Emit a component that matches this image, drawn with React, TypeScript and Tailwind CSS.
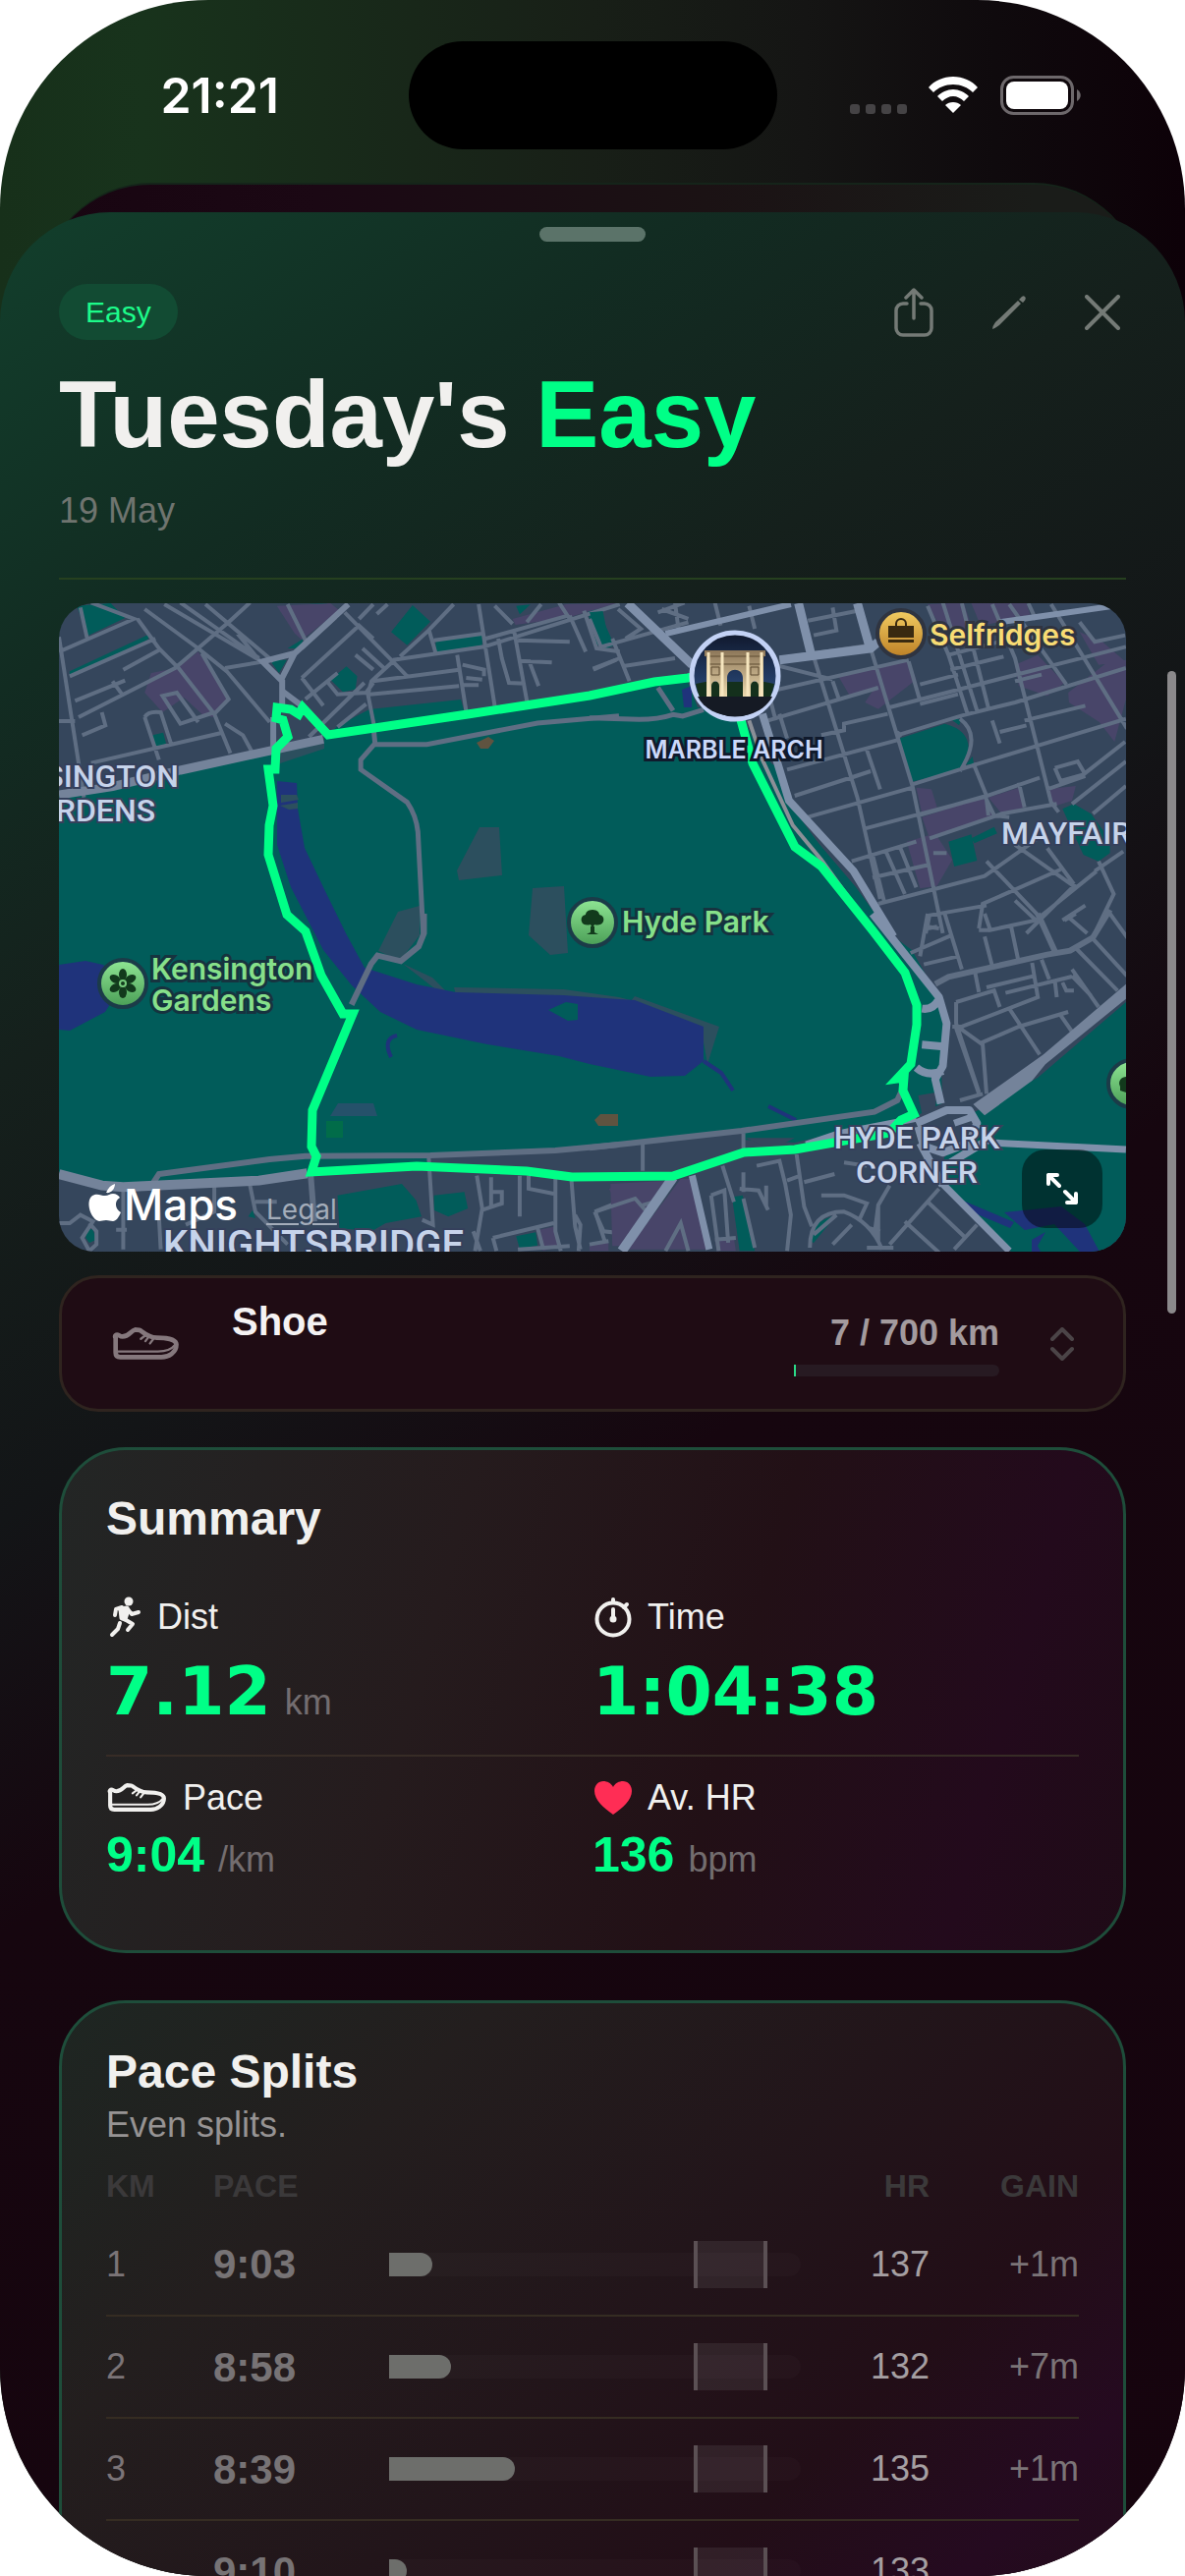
import type { ReactNode } from 'react';

const summary = [
  { icon: <RunnerIcon />, label: 'Dist', value: '7.12', unit: 'km', large: true },
  { icon: <StopwatchIcon />, label: 'Time', value: '1:04:38', unit: '', large: true },
  { icon: <ShoeIcon className="w-[62px] h-[30px]" />, label: 'Pace', value: '9:04', unit: '/km', large: false },
  { icon: <HeartIcon />, label: 'Av. HR', value: '136', unit: 'bpm', large: false },
];

const splits = [
  { km: 1, pace: '9:03', fill: 10.5, hr: 137, gain: '+1m' },
  { km: 2, pace: '8:58', fill: 15, hr: 132, gain: '+7m' },
  { km: 3, pace: '8:39', fill: 30.6, hr: 135, gain: '+1m' },
  { km: 4, pace: '9:10', fill: 4.3, hr: 133, gain: '' },
];

export default function App() {
  return (
    <div className="relative flex h-screen flex-col overflow-hidden rounded-[212px] bg-[linear-gradient(90deg,#17301a_0%,#18331c_12%,#181f17_50%,#151514_68%,#0f0a0d_84%,#0d0108_100%)] font-['Liberation_Sans',Arial,sans-serif] text-[#f1f0ee]">
      <StatusBar />

      {/* Card stacked behind the open sheet */}
      <div className="mx-[42px] mt-[34px] -mb-28 h-[142px] shrink-0 rounded-t-[112px] border-t-2 border-[#15241a] bg-[linear-gradient(90deg,#180511_0%,#1b0814_25%,#1b1214_60%,#1a1c19_90%)]" />

      <main className="relative min-h-0 flex-1 overflow-hidden rounded-t-[112px] bg-[linear-gradient(145deg,#123f2c_0%,#122c22_15%,#15201c_27%,#131517_41%,#16060f_54%,#16040e_100%)] px-[60px]">
        <div className="mx-auto mt-[15px] h-[15px] w-[108px] rounded-full bg-[#5b7369]" />

        <header className="border-b-2 border-[#26401f] pb-12">
          <div className="mt-[43px] flex items-center justify-between">
            <span className="rounded-full bg-[#124b33] px-[27px] py-[10px] text-[30px] leading-[37px] text-[#1dfb8a]">Easy</span>
            <div className="flex items-center gap-[59px] text-[#747a76]">
              <button type="button" aria-label="Share"><ShareIcon /></button>
              <button type="button" aria-label="Edit"><PencilIcon /></button>
              <button type="button" aria-label="Close" className="mr-[6px]"><CloseIcon /></button>
            </div>
          </div>
          <h1 className="mt-7 text-[96px] font-bold leading-[96px]">
            Tuesday&apos;s <span className="text-[#00ff87]">Easy</span>
          </h1>
          <p className="mt-[30px] text-[36px] leading-10 text-[#6f746f]">19 May</p>
        </header>

        <section className="relative mt-6 overflow-hidden rounded-[36px]">
          <RouteMap />
          <a href="#legal" className="absolute bottom-[27px] left-[211px] font-['Inter',sans-serif] text-[28px] leading-8 text-[#a4adba] underline decoration-2 underline-offset-4">
            Legal
          </a>
          <button type="button" aria-label="Expand map" className="absolute right-6 bottom-6 flex h-20 w-[82px] items-center justify-center rounded-3xl bg-black/45">
            <ExpandIcon />
          </button>
        </section>

        <button type="button" className="mt-6 flex h-[139px] w-full items-center rounded-[40px] border-3 border-[#2f241f] bg-[#1f0c14] px-[50px] text-left">
          <ShoeIcon className="h-[34px] w-[70px] text-[#85787d]" />
          <span className="ml-[53px] self-start pt-5 text-[40px] font-bold leading-12 text-[#f5f2f3]">Shoe</span>
          <span className="ml-auto flex w-[209px] flex-col items-end gap-[10px]">
            <span className="text-[36px] font-bold leading-11 whitespace-nowrap text-[#a39b9e]">7 / 700 km</span>
            <span className="h-3 w-full overflow-hidden rounded-r-md bg-[#271a22]">
              <span className="block h-full w-[1%] bg-[#2bd987]" />
            </span>
          </span>
          <ChevronsIcon />
        </button>

        <section className="mt-9 rounded-[68px] border-3 border-[#1e4d3a] bg-[linear-gradient(105deg,#232625_0%,#251b1d_35%,#221016_62%,#230a1c_85%,#1f0b17_100%)] px-[45px] pt-[42px] pb-[69px]">
          <h2 className="text-[48px] font-bold leading-14">Summary</h2>
          <div className="mt-[50px] grid grid-cols-2 border-b-2 border-[#372c26] pb-7">
            {summary.slice(0, 2).map((item) => <Stat key={item.label} {...item} />)}
          </div>
          <div className="mt-5 grid grid-cols-2">
            {summary.slice(2).map((item) => <Stat key={item.label} {...item} />)}
          </div>
        </section>

        <section className="mt-12 rounded-[68px] border-3 border-[#1e4d3a] bg-[linear-gradient(135deg,#1e2622_0%,#231e1e_25%,#22151a_50%,#220e17_70%,#250a20_85%,#220c18_100%)] px-[45px] pt-[42px] pb-12">
          <h2 className="text-[48px] font-bold leading-14">Pace Splits</h2>
          <p className="mt-1 text-[36px] leading-11 text-[#969393]">Even splits.</p>
          <table className="mt-3 w-full table-fixed text-[36px] text-[#7b7477]">
            <thead className="text-[32px] text-[#3b393a]">
              <tr className="h-14">
                <th className="w-[109px] p-0 text-left">KM</th>
                <th className="w-[179px] p-0 text-left">PACE</th>
                <th className="p-0"><span className="sr-only">Effort</span></th>
                <th className="w-[131px] p-0 text-right">HR</th>
                <th className="w-[152px] p-0 text-right">GAIN</th>
              </tr>
            </thead>
            <tbody>
              {splits.map((split) => (
                <tr key={split.km} className="h-[104px] border-b-2 border-[#352c22]">
                  <td className="p-0">{split.km}</td>
                  <td className="p-0 text-[42px] font-bold text-[#777375]">{split.pace}</td>
                  <td className="p-0"><PaceBar fill={split.fill} /></td>
                  <td className="p-0 text-right text-[#a59fa2]">{split.hr}</td>
                  <td className="p-0 text-right">{split.gain}</td>
                </tr>
              ))}
            </tbody>
          </table>
        </section>
      </main>

      {/* Scroll indicator */}
      <div className="absolute top-[683px] right-[9px] h-[654px] w-[9px] rounded-full bg-[#8b898b]" />
    </div>
  );
}

function StatusBar() {
  return (
    <div className="mt-[42px] grid h-[110px] shrink-0 grid-cols-[1fr_375px_1fr] items-center">
      <span className="pl-8 text-center font-['Inter',sans-serif] text-[50px] font-semibold leading-none text-white">21:21</span>
      <span className="h-full rounded-full bg-black" />
      <div className="flex items-center justify-center pr-8">
        <svg viewBox="0 0 58 38" className="h-[38px] w-[58px]" fill="#454345">
          <rect x="0" y="28" width="10" height="10" rx="3" />
          <rect x="16" y="28" width="10" height="10" rx="3" />
          <rect x="32" y="28" width="10" height="10" rx="3" />
          <rect x="48" y="28" width="10" height="10" rx="3" />
        </svg>
        <svg viewBox="0 0 50 38" className="ml-[22px] h-[38px] w-[50px]" fill="#fff">
          <path d="M25 0C35 0 44 4 50 11l-5 5C40 11 33 8 25 8S10 11 5 16l-5-5C6 4 15 0 25 0Z" />
          <path d="M25 13c6 0 12 3 16 7l-5 5c-3-3-7-5-11-5s-8 2-11 5l-5-5c4-4 10-7 16-7Z" />
          <path d="M25 26c3 0 6 1 8 3l-8 8-8-8c2-2 5-3 8-3Z" />
        </svg>
        <svg viewBox="0 0 82 40" className="ml-[23px] h-10 w-[82px]">
          <rect x="1.500" y="1.500" width="72" height="37" rx="12" fill="none" stroke="#6d686b" strokeWidth="3" />
          <rect x="6" y="6" width="63" height="28" rx="8" fill="#fff" />
          <path d="M78 14c5 3 5 9 0 12Z" fill="#6d686b" />
        </svg>
      </div>
    </div>
  );
}

function Stat({ icon, label, value, unit, large }: { icon: ReactNode; label: string; value: string; unit: string; large: boolean }) {
  return (
    <div>
      <div className="flex items-center gap-4 text-[36px] leading-11">
        {icon}
        {label}
      </div>
      <p
        className={
          large
            ? "mt-[18px] font-['DejaVu_Sans',sans-serif] text-[68px] font-bold leading-[72px] text-[#00ff87]"
            : 'mt-2 text-[50px] font-bold leading-14 text-[#00ff87]'
        }
      >
        {value}
        {unit && <span className="ml-[14px] font-['Liberation_Sans',Arial,sans-serif] text-[36px] font-normal leading-none text-[#736d6f]">{unit}</span>}
      </p>
    </div>
  );
}

function PaceBar({ fill }: { fill: number }) {
  return (
    <div className="relative flex h-12 items-center">
      <div className="h-6 w-full rounded-r-full bg-white/2">
        <div className="h-full rounded-r-xl bg-[#6d6e6b]" style={{ width: `${fill}%` }} />
      </div>
      {/* Target pace zone */}
      <div className="absolute inset-y-0 left-[74%] w-[18%] border-x-4 border-[#5b5054] bg-white/7" />
    </div>
  );
}

function RouteMap() {
  return (
    <svg viewBox="0 0 1086 660" className="block h-auto w-full" fill="none">
      <defs>
        <linearGradient id="pinGreen" x1="0" y1="0" x2="0" y2="1">
          <stop offset="0" stopColor="#8fe694" />
          <stop offset="1" stopColor="#4a9e56" />
        </linearGradient>
        <linearGradient id="pinGold" x1="0" y1="0" x2="0" y2="1">
          <stop offset="0" stopColor="#f3cd62" />
          <stop offset="1" stopColor="#bd8026" />
        </linearGradient>
        <linearGradient id="night" x1="0" y1="0" x2="0" y2="1">
          <stop offset="0" stopColor="#10182c" />
          <stop offset="0.600" stopColor="#25406b" />
          <stop offset="1" stopColor="#10151f" />
        </linearGradient>
        <linearGradient id="stone" x1="0" y1="0" x2="0" y2="1">
          <stop offset="0" stopColor="#8d7759" />
          <stop offset="1" stopColor="#ecd9ae" />
        </linearGradient>
      </defs>

      <rect width="1086" height="660" fill="#35465c" />

      {/* Parks and water */}
      <path fill="#015c5a" d="M0 195 54 186 124 169 174 158 216 149 269 138 285 124 316 108 409 98 413 112 540 94 608 82 640 80 650 106 690 110 725 163 749 216 811 289 845 336 868 353 896 403 903 433 898 473 899 509 849 533 791 539 749 549 695 546V539L540 555 378 562 374 571 257 579 204 588 98 593H65L0 579Z" />
      <path fill="#015c5a" d="M1086 406 996 483 930 519 938 533 901 564 899 593 969 660H1086Z" />
      <path fill="#2c4f5e" d="M220 150 270 136V148L222 164ZM428 228h20l3 49-44 5-2-10ZM482 290l32-2 4 68-18 2-22-20ZM345 314l22-6v30l-20 26-22-10ZM350 367l30 14 16 16-10-2ZM402 391l112 2 56 8 16 4v6l-80-10-102-2ZM586 400l86 31-12 38-6-34-72-30Z" />
      <path fill="#1f337b" d="M222 181l20 2 1 26 7 40 19 40 23 47 19 35 53 17 40 8 109 3 57 4 16 1 70 27v35l-19 15-35 1-62-13-31-8-73-12-72-15-37-18-29-27-29-36-33-64-14-43Z" />
      <path fill="#1f337b" d="M0 368l27-4 18 4 20 19-18 29-36 19-11-1Z" />
      <path fill="#015c5a" d="M498 414l18-8 12 2v16l-10 1Z" />
      <path fill="#2c4f5e" d="M226 195h16l2 5-18 3ZM225 206l18-3v6l-9 1Z" />
      <path stroke="#1f337b" strokeWidth="4" d="M656 466l18 12 12 18M722 512l28 14M344 440c-10 2-12 10-6 22" />
      <path fill="#1f337b" d="M920 608l52 22-4 6-48-20ZM962 620l58-6 24 18 15 28h-20l-26-28-30 6ZM1004 640l-8 14 4 8h-10v-14ZM634 88l10-4v22h-8Z" />
      <path fill="#25516a" d="M284 509h36l4 13h-48Z" />
      <path fill="#016c49" d="M272 527h17v17h-17Z" />
      <path fill="#5f5340" d="M425 142l12-6 6 4-6 8h-8ZM545 526l6-6h18v12h-20Z" />

      <NorthWestStreets />
      <NorthEastStreets />
      <SouthWestStreets />
      <SouthEastStreets />

      {/* Recorded route */}
      <path
        stroke="#00ff87"
        strokeWidth="9"
        strokeLinejoin="miter"
        d="M650 74 640 76 606 80 540 94 416 113 274 134 248 106 244 113 236 108 222 106 221 117 228 119 233 136 221 148 220 169 213 169 218 206 214 226 213 256 232 317 251 334 267 379 289 418 299 418 258 516 257 553 262 563 257 579 364 573 476 578 522 584 625 583 697 559 749 556 845 539 857 526 870 520 859 496 860 483 853 484 867 469 873 429 873 409 861 376 828 333 776 268 749 248 706 163 693 115"
      />

      {/* District names */}
      <g fill="#c6d3ea" stroke="#35405c" strokeWidth="4" paintOrder="stroke" className="font-['Roboto',sans-serif] font-medium" fontSize="32">
        <text x="122" y="187" textAnchor="end">SINGTON</text>
        <text x="98" y="222" textAnchor="end">RDENS</text>
        <text x="959" y="245">MAYFAIR</text>
        <text x="873" y="555" textAnchor="middle">HYDE PARK</text>
        <text x="873" y="590" textAnchor="middle">CORNER</text>
        <text x="106" y="667" fontSize="40">KNIGHTSBRIDGE</text>
      </g>

      {/* Places */}
      <g stroke="#16333f" strokeWidth="6" paintOrder="stroke" className="font-['Inter',sans-serif] font-semibold" fontSize="30">
        <g fill="#86e08a">
          <text x="573" y="335">Hyde Park</text>
          <text x="94" y="383">Kensington</text>
          <text x="94" y="415">Gardens</text>
        </g>
        <text x="886" y="43" fill="#f8dc74" stroke="#2f3440">Selfridges</text>
        <text x="687" y="158" fill="#cbd9fb" stroke="#101a2c" fontSize="25" textAnchor="middle">MARBLE ARCH</text>
      </g>
      <g stroke="#1b3b48" strokeWidth="4" fill="url(#pinGreen)">
        <circle cx="543" cy="325" r="24" />
        <circle cx="65" cy="387" r="24" />
        <circle cx="1092" cy="489" r="24" />
        <circle cx="857" cy="31" r="24" fill="url(#pinGold)" stroke="#2f3440" />
      </g>
      <g fill="#123a1c">
        <path d="M541 329h4v6l4 2h-12l4-2ZM543 312c5 0 7 3 7 5 4 1 5 4 4 7-2 4-6 4-9 3l-2 4-2-4c-3 1-8 1-9-3-1-3 0-6 4-7 0-2 2-5 7-5Z" />
        <path d="M1080 492c-3-6 2-10 6-10v16l-6-2Z" />
        <g>
          <ellipse cx="65" cy="378" rx="4" ry="6" />
          <ellipse cx="65" cy="396" rx="4" ry="6" />
          <ellipse cx="65" cy="378" rx="4" ry="6" transform="rotate(60 65 387)" />
          <ellipse cx="65" cy="378" rx="4" ry="6" transform="rotate(120 65 387)" />
          <ellipse cx="65" cy="378" rx="4" ry="6" transform="rotate(240 65 387)" />
          <ellipse cx="65" cy="378" rx="4" ry="6" transform="rotate(300 65 387)" />
          <circle cx="65" cy="387" r="5" />
          <circle cx="65" cy="387" r="4" fill="#76cc7c" />
          <circle cx="65" cy="387" r="2" />
        </g>
      </g>
      <path fill="#3a2a10" d="M844 23h26v12h-26ZM844 37h26v3h-26Z" />
      <path stroke="#3a2a10" strokeWidth="2" d="M852 23v-2a5 5 0 0 1 10 0v2" />

      {/* Marble Arch landmark */}
      <circle cx="688" cy="74" r="44" fill="url(#night)" stroke="#c3d2f5" strokeWidth="5" />
      <path fill="#14301c" d="M648 82l10-2 60 0 10 2-4 14h-72Z" />
      <path fill="#151a24" d="M650 95h76c-6 12-20 20-38 20s-32-8-38-20Z" />
      <path fill="url(#stone)" fillRule="evenodd" d="M657 48h62v6h-2v41h-58V54h-2ZM680 95V76c0-11 16-11 16 0v19ZM664 95V84c0-6 8-6 8 0v11ZM704 95V84c0-6 8-6 8 0v11Z" />
      <path stroke="#5f4c33" strokeWidth="1" d="M658 54h60M660 62h56M664 65h8v8h-8ZM704 65h8v8h-8Z" />
      <path stroke="#f6e6bf" strokeWidth="3" d="M661 50v45M675 50v45M701 50v45M715 50v45" />

      {/* Apple Maps mark */}
      <path fill="#fff" d="M48 600c2-5 5-8 9-9 0 5-4 10-9 9Zm-1 3c3 0 5-2 8-2s6 2 7 4c-6 3-5 12 1 15-2 5-5 9-8 9s-4-1-7-1-5 1-7 1c-8-1-15-20-7-26 5-3 9 0 13 0Z" />
      <text x="66" y="628" fill="#fff" fontSize="44" className="font-['Inter',sans-serif] font-medium">Maps</text>
    </svg>
  );
}

function NorthWestStreets() {
  return (
    <g transform="translate(0 -4) scale(0.3635 0.3333)">
      <path fill="#015c5a" d="M50 20l95-8 40 45-105 55ZM30 220l220-112v14L30 236ZM590 185h48l-22 40ZM640 150l45-30-10 30ZM990 18l50 50-65 72-45-40ZM1055 125l130-20v35l-130 22ZM760 245l45-40 30 30-5 40-35 8ZM262 415l30-8 8 35-35 10ZM1480 35l30-5 45 110-25 12-25-15ZM1280 20l40-4-30 30ZM700 15l50-4 20 50-20 10Z" />
      <path fill="#484569" d="M610 20l150-8 25 22-105 90-20-20ZM330 210l60-50 85 140-45 60-30-10-50-50-60 45-50-60 18-60ZM1270 60l150-45 148-4-145 45-145 22Z" />
      <g stroke="#5f6e83" strokeWidth="4">
        <path vectorEffect="non-scaling-stroke" d="M0 160l210-100-120-50M60 25l20 100M30 235l240-115M45 310l140-62M150 250l30 45M180 215l100-60M0 115l70 490M0 372h45M55 360l270-150 150-140 60-60M65 415l65-30-10-40M220 60l60 90 55 60 100 140 45 120M240 30l150 120 80 70 120 155M295 15l265 170M340 10l220 170M410 15l190 175M470 75l60-60M240 360l40 130M240 360q10-20 45-15l30 100M90 500l365-92M435 345l-95 35-50-85 40-10 60 90M435 350l40-45-75-140M465 380l50 35 25 50M465 210l110-20M560 185l-60-80M775 55l-95 95M800 40l135 150-60 60-10 40 18 100M680 240l160-160 40 40M680 240l60 85M690 305l90-80M750 250l30 40 80-5 20-30M700 420l155-165M780 390l80-70M870 290l250-25M880 250l240-35M935 190l40 45M850 150l60 60M830 170l50 45M935 185l255-40 380-130M955 175l80-80 70-80M1035 90l20 75M1050 125l135-20M890 45l30-30M840 60l40-45M1115 170l25 170M1130 200l60 15v20M1140 240l45 5M1130 262h45M1175 15l45 310M1195 120l230-70M1230 120l10 60 20 75 45 2M1275 100l35 210M1285 125l145 5M1290 188l90 5M1315 185l28 80M1430 50l45 110M1470 35l35 115 65 10M1495 212l75-32M1220 20l50 55M1310 70l40-55M1400 10l30 50M640 15l50 110" />
        <path vectorEffect="non-scaling-stroke" strokeWidth="5" d="M880 385l5 55-40 50v30l130 100q25 40 30 90l15 315M885 443h145l310-65 228-22" />
      </g>
      <path stroke="#74839a" strokeWidth="9" vectorEffect="non-scaling-stroke" d="M0 597l150-25 190-50 400-95" />
      <path stroke="#74839a" strokeWidth="6" vectorEffect="non-scaling-stroke" d="M810 15L660 165l-90 25 55 60v75M660 165l-40 85M600 450V360M625 280l55 45" />
    </g>
  );
}

function NorthEastStreets() {
  return (
    <g transform="translate(540 -4) scale(0.3866 0.3333)">
      <path fill="#015c5a" d="M0 40l35-4 18 105-20 8ZM815 425l120-45q70 20 62 90l-20 50-130 38ZM950 365l28 2-5 18ZM990 505l18-25 4 25ZM945 740l60-22 15 80-60 18ZM1245 640l30-15 45 30 50 80v40l-30 25-40-20ZM1005 730l60-35 8 20-60 30Z" />
      <path fill="#015c5a" d="M460 490l40 25 40 130 150 240-25-5-140-215Z" />
      <path fill="#484569" d="M655 235l185-50 20 60-100 90-35-20 20-35-60 15ZM890 15l95-5 30 110-70 10ZM1005 12h145l10 35-130 35ZM1120 200l60-30 70 85-45 40-75-30ZM1260 285l100-90 52-10v120l-30 130-40-60-80-60ZM860 575l40 5 15 55-40 20ZM875 665l160-60 40 60-180 65ZM835 740l75-25 45 80-40 80-45 8ZM1050 605l80-30 15 60-60 20ZM1205 580l75-10-10 45-55 20ZM1290 100l60 30 60 60-70 10Z" />
      <g stroke="#5f6e83" strokeWidth="4">
        <path vectorEffect="non-scaling-stroke" d="M0 60l30 85 230-75M60 120l45 130M75 30l60 60-40 30M85 205l140-25M10 215l60-30M225 10l10 90M330 10l15 70M420 20l15 70M190 30l70 30M180 40l70-30M590 110l60-15-10-70M470 195l170 50M500 180l240-40M470 280l20 90M500 350l20 75M470 370l290-100M480 280l360-95M640 250l15 50M575 65l130-30M590 175l115 430 60 310M610 415l60-15v-20l115-30M520 520l290-90M540 600l200-75M575 665l275-90M690 545l50-20M730 460l35 120M740 150l110 420 80 450M790 330l250-75 372-110M810 415l170-60 140-40 292-105M820 420l-10-15M850 565l165-60 397-140M870 320l100-30M840 190l30 120M870 260l100-30M890 20l55 150 50 180M930 10l90 330M980 12l70 320M1060 15l60 165 95 440 20 30M945 170l150-45M950 215l140-40M1105 15l150 245M1155 12l20 50M1215 15l200 380M1120 250l70-20M1145 370l160-45M1060 370l20 70M1080 405l70-20M1290 70l40 60 80-20M725 700l310-95 150-60M865 660l180-60M895 730l190-75 145-30M690 800l170-60M745 850l150-40M780 770l50 130M815 750l45 130M745 780l30 140M905 775h35M1040 600l25 60 40 5M1130 560l15 75M1045 610l5 50M975 365q60 50 0 160M1010 500l35 100M1225 515l60-20 20 40M1225 515l15 40 60-20 110-100M1205 580l100-40M1270 625l142-130M1325 655l87-85M760 930l280-85 135-110M1045 800l140 170M1120 750l160 130M1205 760l70 110M1240 825l-205 105-10 75M1335 830l-160 150-55-60M1340 800l40 100-50 120M1280 870l-130 150M885 1020l10-55 150-30M890 1000l30 5M1245 980l60-45M1260 970l50 50M1330 830l75-60" />
      </g>
      <g stroke="#7f90aa" strokeWidth="9">
        <path vectorEffect="non-scaling-stroke" d="M100 12L270 200M550 12l35 165M705 12l35 145M500 185l240-35 20-20" />
        <path vectorEffect="non-scaling-stroke" strokeWidth="8" d="M455 350l20 75 50 190 170 215 105 200" />
        <path vectorEffect="non-scaling-stroke" strokeWidth="4" stroke="#8b8f97" d="M420 370l35 120 80 200 75 105 140 225" />
        <path vectorEffect="non-scaling-stroke" strokeWidth="6" d="M200 105l330-90M1080 70l332-55" />
        <path vectorEffect="non-scaling-stroke" strokeWidth="5" stroke="#5f6e83" d="M0 362l130 5q50 0 90-15l25 5 55-20M180 270l40 70" />
      </g>
    </g>
  );
}

function SouthWestStreets() {
  return (
    <g transform="translate(0 316) scale(0.3635 0.3333)">
      <path fill="#015c5a" d="M780 860l180-35 40 50 15 50-100 20-40 25-90-10ZM1050 860l85-10 10 50-55 25-40-20ZM80 960l15 5 10 30-20 10-10-15ZM1280 985l55-12 5 40-50 10ZM530 925l12-20 8 25Z" />
      <path fill="#484569" d="M1540 840l28-10v70ZM1345 965l45-10 15 60-50 15Z" />
      <g stroke="#5f6e83" strokeWidth="4">
        <path vectorEffect="non-scaling-stroke" strokeWidth="6" d="M1022 0v60l-15 40-50 45-65-17-18 25-55 125M265 820l15-25 310-45 100-10 350-2 350-15 178-18M705 800l10 140" />
        <path vectorEffect="non-scaling-stroke" d="M1035 740l12 210-30-15M180 835v190M275 825l10 200M435 830v80l-80 40M535 830l15 80 90 100M550 880h60M0 945h30l30-25 35 20-30 50 20 40 20-20v-40l-20-25M160 965h30M1170 800l15 100-20 130M1185 905l55-20V850h-30v50M1210 805v90M1290 800v125M1315 800v40l70 15M1390 810v160l15 60M1435 815l10 140 15 70M1215 990l170-45M1215 990l10 40M1500 910l68-30M1500 910l25 60 43 5M1285 1025l145-10M1160 970l20 60M1340 960l15 60M1445 920l15 30-5 80" />
      </g>
      <path stroke="#74839a" strokeWidth="10" vectorEffect="non-scaling-stroke" d="M0 795l120 35 60 5 380-20 135-22" />
    </g>
  );
}

function SouthEastStreets() {
  return (
    <g transform="translate(540 316) scale(0.3866 0.3333)">
      <path fill="#015c5a" d="M375 865l28-5 32 170h-40ZM580 1000q0-60 70-80l-60 85Z" />
      <path fill="#484569" d="M55 825l155-10-110 200H60ZM240 810h35l40 215H100ZM330 995l50-5 5 40h-50ZM0 1010l50-5v25H0Z" />
      <path fill="#35465c" d="M410 685l130 0-60 35ZM865 555l50-10-5 50-35 15Z" />
      <g stroke="#5f6e83" strokeWidth="4">
        <path vectorEffect="non-scaling-stroke" strokeWidth="6" d="M0 715l400-52 350-58 60-35 10-25M910 215l35-22 260-68 60-12 60-40 45-85M1180 0l45 115" />
        <path vectorEffect="non-scaling-stroke" d="M140 705v80M405 670v50M890 0l-20 130M845 120l110-55M880 155l90-25M935 0l45 170M890 45l25-5M1040 0l15 50 120-30M1040 70l20 90M1110 40l20 110M1025 50h30M1015 180l10 60M965 270l100-35 15 50M1045 225l125-35M1095 242l175-50M1165 150l15 105-200 90M1190 140l20 60M1225 205l5 50M1245 210l10 25h20M1270 170l70 115M1270 190l50 60M965 270v65l60 210M975 350l60 50 10 150M1030 395l100-50 130-45M1105 290l80 140M1240 310l30 50M955 345h30M975 570l60-20M1025 550l-60-200M1280 105l110 130M1320 70l95 120M1370 0l50 80M1250 20l30-20M350 770l30 110M405 790v60M320 860l35-15 10 160M320 860l20 170M395 840l50 5 25 60M440 770l60-15 15 70 15 95-10 110M545 735l20 160 20 60M520 815l35-15M565 820l80-25M610 860h60l60 25-20 50M670 760l60 10M580 1020q0-110 90-110 70 30 100 115M590 980l60-60M640 1010l50-60M790 830l-30 60v110M760 890l-10 90M890 880l100 110M830 940l90 95M920 840l-130 170M1020 950l-60 75M15 910l105-40 30 40M15 910l25 90M140 890l30-10M200 1030l40-85 20 85M465 830v65M405 870l30 150M330 995l55-5M0 1010l50-10M730 1020h70M735 960l30 10" />
      </g>
      <g stroke="#7f90aa" strokeWidth="9" strokeLinejoin="round">
        <path vectorEffect="non-scaling-stroke" strokeWidth="8" d="M745 0l175 255 20 80-10 130-20 40 15 75M860 470q30 30 70 10M875 290q30 5 45-30M875 400l50 5M860 640l80-40h60l20 40-20 60-70 30-50-20-15-60M870 700l60 130M1050 690l-100 70" />
        <path stroke="none" fill="#74839a" d="M1412 215L1195 430 1010 582l30 34L1165 510 1200 460 1412 260Z" />
        <path vectorEffect="non-scaling-stroke" strokeWidth="10" stroke="#7f90aa" d="M220 805l-135 225" />
        <path vectorEffect="non-scaling-stroke" strokeWidth="7" d="M270 800l45 225M1070 700l342 20M925 820l180 210M570 705l90-35 200-45M960 640l50-20" />
      </g>
    </g>
  );
}

function ShareIcon() {
  return (
    <svg viewBox="0 0 40 50" className="h-[50px] w-10" fill="none" stroke="currentColor" strokeWidth="3.500" strokeLinecap="round" strokeLinejoin="round">
      <path d="M13 16H9a7 7 0 0 0-7 7v18a7 7 0 0 0 7 7h22a7 7 0 0 0 7-7V23a7 7 0 0 0-7-7h-4M20 31V2M12 10l8-8 8 8" />
    </svg>
  );
}

function PencilIcon() {
  return (
    <svg viewBox="0 0 36 36" className="size-9" fill="currentColor">
      <path d="M27 6l3 3L8 31q-4 3-7 4 0-3 3-7ZM29 4q3-4 5-2t-1 5l-1 1-4-3Z" />
    </svg>
  );
}

function CloseIcon() {
  return (
    <svg viewBox="0 0 36 36" className="size-9" fill="none" stroke="currentColor" strokeWidth="4" strokeLinecap="round">
      <path d="M2 2l32 32M34 2L2 34" />
    </svg>
  );
}

function ExpandIcon() {
  return (
    <svg viewBox="0 0 32 32" className="size-8" fill="none" stroke="#fff" strokeWidth="4" strokeLinecap="round" strokeLinejoin="round">
      <path d="M13 13L2 2M2 11V2h9M19 19l11 11M30 21v9h-9" />
    </svg>
  );
}

function ShoeIcon({ className }: { className: string }) {
  return (
    <svg viewBox="-2 -1 60 29" className={className} fill="none" stroke="currentColor" strokeWidth="4" strokeLinecap="round" strokeLinejoin="round">
      <path d="M2 8q-1-1 0-2c2-2 3 1 6 1 6 0 7-5 11-6 2 0 4 0 5 1 4 3 8 6 14 6 7 0 17 1 17 6 0 7-7 11-13 11H6q-4 0-4-4Z" />
      <path d="M2 20h37c7 0 12-2 15-6" strokeWidth="2" />
      <path d="M24 9l4-3M28 11l3-4M32 13l3-4" strokeWidth="2" />
    </svg>
  );
}

function ChevronsIcon() {
  return (
    <svg viewBox="0 0 24 34" className="ml-[52px] h-[34px] w-6" fill="none" stroke="#4b4447" strokeWidth="4" strokeLinecap="round" strokeLinejoin="round">
      <path d="M2 12L12 2l10 10M2 22l10 10 10-10" />
    </svg>
  );
}

function RunnerIcon() {
  return (
    <svg viewBox="-4 0 36 42" className="h-[42px] w-9" fill="none" stroke="currentColor" strokeLinecap="round" strokeLinejoin="round">
      <circle cx="19" cy="5" r="4.500" fill="currentColor" stroke="none" />
      <path d="M11 13l6-1 1 2-3 9-3-1Z" strokeWidth="5" fill="currentColor" />
      <path d="M12 11l-6 2-1 6M18 13l4 5 7-2M13 22l10 6-5 6M10 27l-2 6-6 6" strokeWidth="4" />
    </svg>
  );
}

function StopwatchIcon() {
  return (
    <svg viewBox="0 0 40 42" className="h-[42px] w-10" fill="none" stroke="currentColor" strokeWidth="4" strokeLinecap="round">
      <circle cx="21" cy="23" r="16.500" />
      <path d="M21 13v9M21 3v3M35 8l-3 3" />
      <circle cx="21" cy="23" r="3.500" fill="currentColor" stroke="none" />
    </svg>
  );
}

function HeartIcon() {
  return (
    <svg viewBox="0 0 40 36" className="h-9 w-10" fill="#ff2d55">
      <path d="M21 35C11 28 2 20 2 11 2 5 6 1 11 1c4 0 8 2 10 6 2-4 6-6 10-6 5 0 9 4 9 10 0 9-9 17-19 24Z" />
    </svg>
  );
}
